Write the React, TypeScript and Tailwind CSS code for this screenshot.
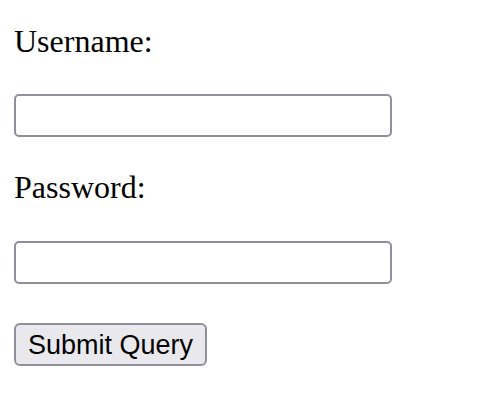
const App: React.FC = () => {
  return (
    <div className="min-h-screen bg-white pl-[14px] pt-[23px] font-['Liberation_Serif',serif] text-black">
      <form className="flex flex-col items-start" onSubmit={(e) => e.preventDefault()}>
        <label htmlFor="username" className="block text-[32px] leading-[37px]">
          Username:
        </label>
        <input
          id="username"
          type="text"
          className="mt-[34px] h-[43px] w-[378px] rounded-[5px] border-2 border-[#8f8f9d] bg-white px-2 outline-none"
        />
        <label htmlFor="password" className="mt-[32px] block text-[32px] leading-[37px]">
          Password:
        </label>
        <input
          id="password"
          type="password"
          className="mt-[35px] h-[43px] w-[378px] rounded-[5px] border-2 border-[#8f8f9d] bg-white px-2 outline-none"
        />
        <button
          type="submit"
          className="mt-[39px] h-[43px] w-[193px] rounded-[6px] border-2 border-[#8f8f9d] bg-[#e9e9ed] pt-[2px] font-['Liberation_Sans',sans-serif] text-[27px] leading-none text-black"
        >
          Submit Query
        </button>
      </form>
    </div>
  );
};

export default App;
